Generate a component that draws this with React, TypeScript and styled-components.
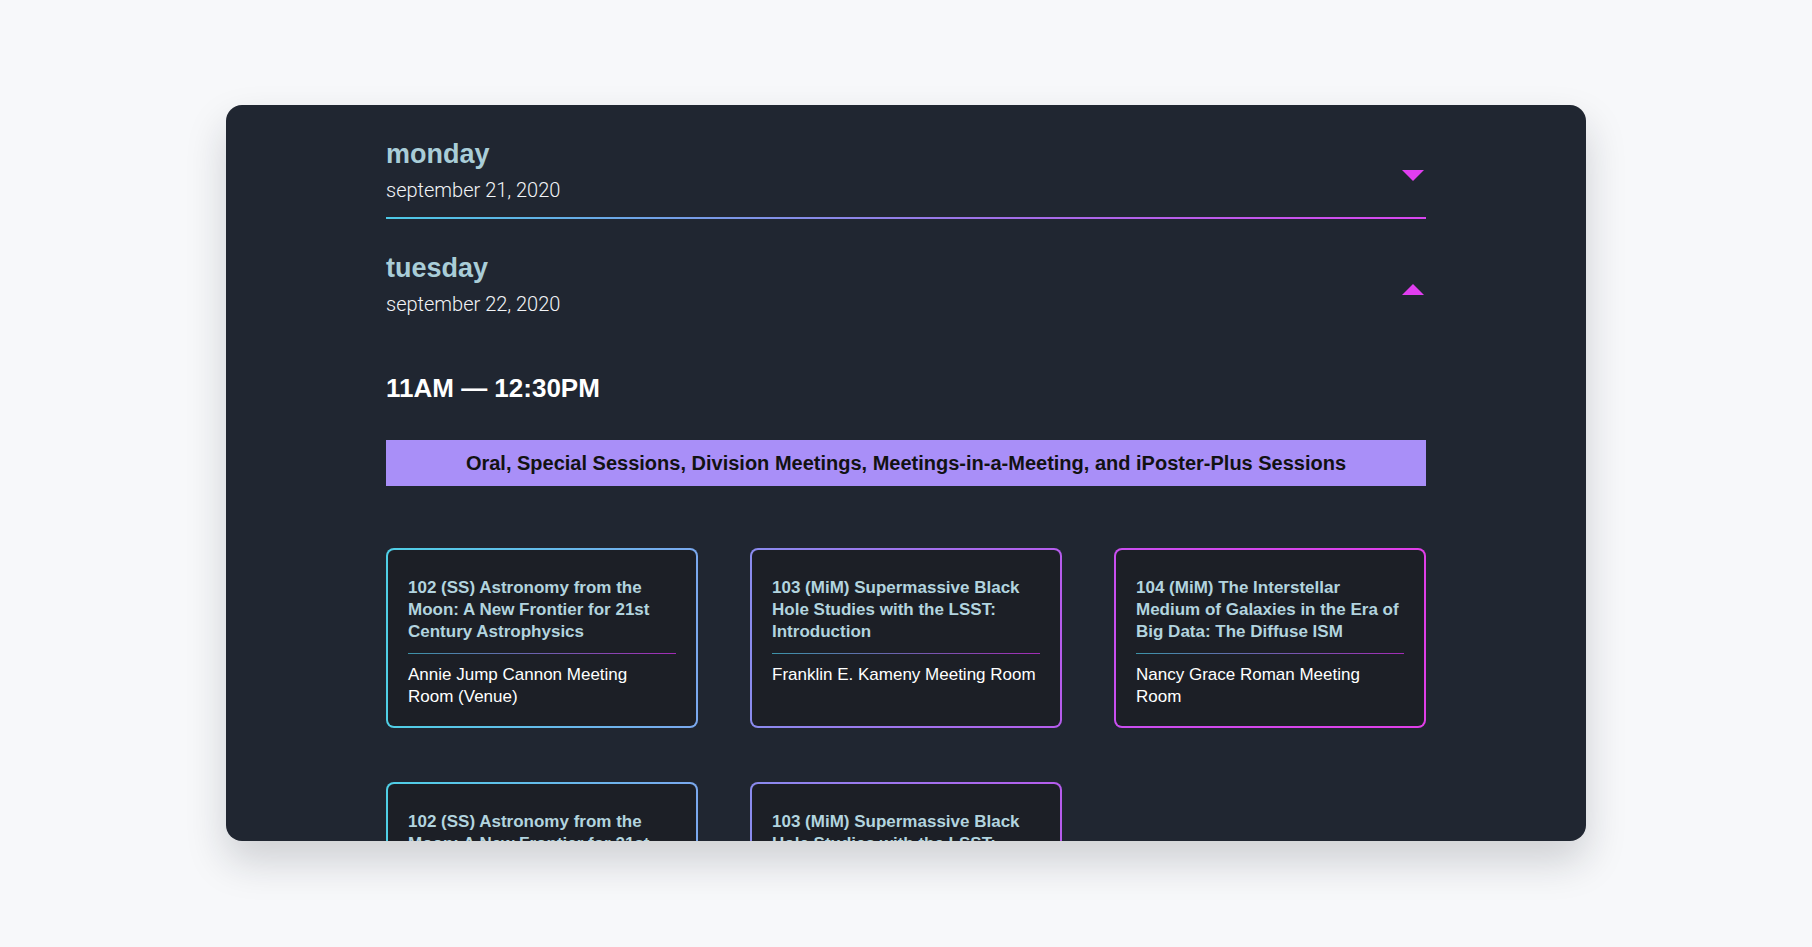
import React from "react";
import styled, { createGlobalStyle } from "styled-components";

const Global = createGlobalStyle`
  body { margin: 0; background: #f7f8fa; font-family: "Liberation Sans", Arial, sans-serif; }
`;

const Page = styled.div`
  padding: 105px 226px 0;
  height: 947px;
  box-sizing: border-box;
`;

const Panel = styled.div`
  background: #202631;
  border-radius: 16px;
  height: 736px;
  overflow: hidden;
  box-shadow: 0 20px 40px rgba(20, 25, 40, 0.18);
  padding: 0 160px;
`;

const DayRow = styled.div<{ divider?: boolean }>`
  display: flex;
  align-items: center;
  justify-content: space-between;
  padding: 34px 0 15px;
  border-bottom: 2px solid transparent;
  ${({ divider }) =>
    divider &&
    `border-image: linear-gradient(90deg, #4cc9e6, #a26ee8 60%, #d946ef) 1;`}
`;

const DayName = styled.div`
  font-family: "Liberation Sans", Arial, sans-serif;
  font-weight: 700;
  font-size: 27px;
  color: #a9cdd8;
`;

const DayDate = styled.div`
  font-family: Roboto, sans-serif;
  font-weight: 300;
  font-size: 20px;
  color: #f2f4f7;
  margin-top: 8px;
`;

const Caret = styled.div<{ up?: boolean }>`
  width: 0;
  height: 0;
  border-left: 11px solid transparent;
  border-right: 11px solid transparent;
  ${({ up }) =>
    up ? "border-bottom: 11px solid #e13ef0;" : "border-top: 11px solid #e13ef0;"}
  margin-right: 2px;
  margin-top: 10px;
`;

const TimeHeading = styled.h2`
  margin: 40px 0 36px;
  font-size: 26px;
  font-weight: 700;
  color: #fff;
`;

const Banner = styled.div`
  background: #a98ff8;
  height: 46px;
  display: flex;
  align-items: center;
  justify-content: center;
  font-size: 20px;
  font-weight: 700;
  color: #121212;
`;

const Grid = styled.div`
  display: grid;
  grid-template-columns: repeat(3, 312px);
  justify-content: space-between;
  row-gap: 54px;
  margin-top: 62px;
`;

const Card = styled.div<{ from: string; to: string }>`
  height: 180px;
  box-sizing: border-box;
  border: 2px solid transparent;
  border-radius: 8px;
  background: linear-gradient(#1c1f26, #1c1f26) padding-box,
    linear-gradient(90deg, ${({ from }) => from}, ${({ to }) => to}) border-box;
  padding: 27px 20px;
`;

const CardTitle = styled.div`
  font-size: 17px;
  font-weight: 700;
  line-height: 22px;
  color: #b2d4df;
  padding-bottom: 10px;
  border-bottom: 1px solid transparent;
  border-image: linear-gradient(90deg, #3c93a8, #a22bb5) 1;
`;

const CardRoom = styled.div`
  font-size: 17px;
  line-height: 22px;
  color: #fff;
  margin-top: 10px;
`;

const sessions = [
  { t: "102 (SS) Astronomy from the Moon: A New Frontier for 21st Century Astrophysics", r: "Annie Jump Cannon Meeting Room (Venue)", from: "#4fcfe6", to: "#7aa8ee" },
  { t: "103 (MiM) Supermassive Black Hole Studies with the LSST: Introduction", r: "Franklin E. Kameny Meeting Room", from: "#8a8bee", to: "#b65ced" },
  { t: "104 (MiM) The Interstellar Medium of Galaxies in the Era of Big Data: The Diffuse ISM", r: "Nancy Grace Roman Meeting Room", from: "#c94ef0", to: "#e03ee8" },
];

export default function App() {
  const cards = [...sessions, sessions[0], sessions[1]];
  return (
    <Page>
      <Global />
      <Panel>
        <DayRow divider>
          <div>
            <DayName>monday</DayName>
            <DayDate>september 21, 2020</DayDate>
          </div>
          <Caret />
        </DayRow>
        <DayRow>
          <div>
            <DayName>tuesday</DayName>
            <DayDate>september 22, 2020</DayDate>
          </div>
          <Caret up />
        </DayRow>
        <TimeHeading>11AM — 12:30PM</TimeHeading>
        <Banner>Oral, Special Sessions, Division Meetings, Meetings-in-a-Meeting, and iPoster-Plus Sessions</Banner>
        <Grid>
          {cards.map((s, i) => (
            <Card key={i} from={s.from} to={s.to}>
              <CardTitle>{s.t}</CardTitle>
              <CardRoom>{s.r}</CardRoom>
            </Card>
          ))}
        </Grid>
      </Panel>
    </Page>
  );
}
